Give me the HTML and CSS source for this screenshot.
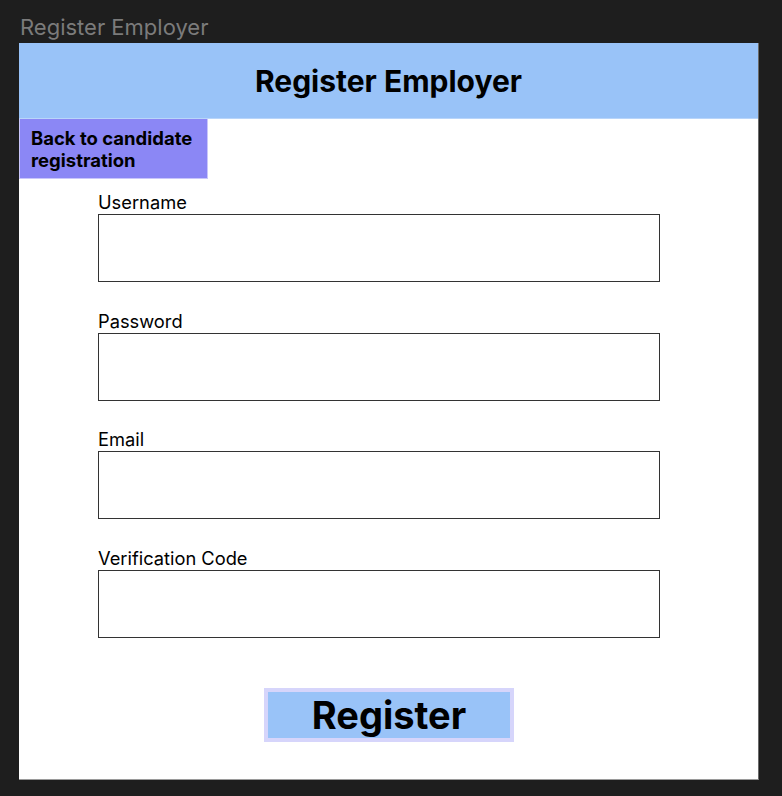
FILE: index.html
```html
<!DOCTYPE html>
<html lang="en">
<head>
<meta charset="utf-8">
<title>Register Employer</title>
<link rel="stylesheet" href="styles.css">
</head>
<body>
<div class="frame-title">Register Employer</div>
<div class="frame">
  <header class="header">
    <h1 class="header-title">Register Employer</h1>
  </header>
  <button class="back-btn" type="button">Back to candidate registration</button>
  <form class="form">
    <div class="field">
      <label class="field-label" for="username">Username</label>
      <input class="field-input" id="username" type="text">
    </div>
    <div class="field">
      <label class="field-label" for="password">Password</label>
      <input class="field-input" id="password" type="password">
    </div>
    <div class="field">
      <label class="field-label" for="email">Email</label>
      <input class="field-input" id="email" type="email">
    </div>
    <div class="field">
      <label class="field-label" for="code">Verification Code</label>
      <input class="field-input" id="code" type="text">
    </div>
    <div class="submit-row">
      <button class="submit-btn" type="button">Register</button>
    </div>
  </form>
</div>
</body>
</html>
```

FILE: styles.css
```css
* {
  box-sizing: border-box;
}

html, body {
  margin: 0;
  padding: 0;
  background: #1e1e1e;
  font-family: Inter, "Noto Sans", "Liberation Sans", sans-serif;
  height: 796px;
  overflow: hidden;
}

.frame-title {
  padding: 12px 0 0 20px;
  height: 43px;
  font-size: 22px;
  line-height: 30px;
  color: #7b7b7b;
}

.frame {
  margin-left: 19px;
  width: 740px;
  height: 737px;
  background: #ffffff;
  border-right: 1px solid #6a6a6a;
  border-bottom: 1px solid #9a9a9a;
  display: flex;
  flex-direction: column;
}

.header {
  height: 76px;
  background: #99c3f8;
  border-bottom: 1px solid #b9d5fa;
  display: flex;
  align-items: center;
  justify-content: center;
}

.header-title {
  margin: 0;
  font-size: 30px;
  font-weight: 700;
  color: #000;
  line-height: 36px;
}

.back-btn {
  align-self: flex-start;
  width: 189px;
  height: 60px;
  margin: 0;
  padding: 8px 6px 0 11px;
  border: 1px solid #c9c6fb;
  border-top: 0;
  background: #8b87f5;
  font-family: inherit;
  font-size: 18.5px;
  font-weight: 700;
  line-height: 22px;
  color: #000;
  text-align: left;
  display: flex;
  align-items: flex-start;
}

.form {
  padding: 15px 0 0 79px;
  display: flex;
  flex-direction: column;
  gap: 30.7px;
}

.field {
  display: flex;
  flex-direction: column;
  width: 562px;
}

.field-label {
  font-size: 18.3px;
  line-height: 17px;
  height: 20px;
  color: #000;
}

.field-input {
  height: 68px;
  margin: 0;
  border: 1px solid #333;
  border-radius: 0;
  background: #fff;
  outline: none;
  font-family: inherit;
  font-size: 16px;
}

.submit-row {
  width: 562px;
  display: flex;
  justify-content: center;
  padding-top: 19px;
  padding-left: 20px;
}

.submit-btn {
  width: 250px;
  height: 54px;
  margin: 0;
  padding: 0;
  border: 4px solid #d6d5fb;
  background: #99c3f8;
  font-family: inherit;
  font-size: 38px;
  font-weight: 700;
  line-height: 44px;
  color: #000;
  text-align: center;
}
```
